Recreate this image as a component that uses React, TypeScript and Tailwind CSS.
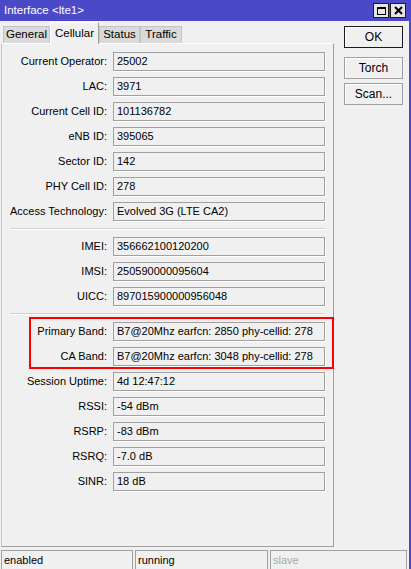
import React from 'react'

type Field = { label: string; value: string }

const radioInfo: Field[] = [
  { label: 'Current Operator:', value: '25002' },
  { label: 'LAC:', value: '3971' },
  { label: 'Current Cell ID:', value: '101136782' },
  { label: 'eNB ID:', value: '395065' },
  { label: 'Sector ID:', value: '142' },
  { label: 'PHY Cell ID:', value: '278' },
  { label: 'Access Technology:', value: 'Evolved 3G (LTE CA2)' },
]

const simInfo: Field[] = [
  { label: 'IMEI:', value: '356662100120200' },
  { label: 'IMSI:', value: '250590000095604' },
  { label: 'UICC:', value: '897015900000956048' },
]

const signalInfo: Field[] = [
  { label: 'Primary Band:', value: 'B7@20Mhz earfcn: 2850 phy-cellid: 278' },
  { label: 'CA Band:', value: 'B7@20Mhz earfcn: 3048 phy-cellid: 278' },
  { label: 'Session Uptime:', value: '4d 12:47:12' },
  { label: 'RSSI:', value: '-54 dBm' },
  { label: 'RSRP:', value: '-83 dBm' },
  { label: 'RSRQ:', value: '-7.0 dB' },
  { label: 'SINR:', value: '18 dB' },
]

const tabs = [
  { name: 'General', width: 'w-[47px]' },
  { name: 'Cellular', width: 'w-[49px]', active: true },
  { name: 'Status', width: 'w-[41px]' },
  { name: 'Traffic', width: 'w-[42px]' },
]

function Row({ label, value }: Field) {
  return (
    <div className="flex items-center h-[19px]">
      <div className="w-[105px] text-right whitespace-nowrap">{label}</div>
      <div className="ml-[6px] w-[212px] h-[19px] border border-[#a0a0a0] shadow-[1px_1px_0_0_#ffffff] pl-[3px] flex items-center whitespace-nowrap overflow-hidden">
        {value}
      </div>
    </div>
  )
}

function Separator() {
  return (
    <div className="h-[4px] pt-[1px]">
      <div className="ml-[8px] w-[315px] h-[2px] border-t border-[#d0d0d0] border-b border-b-white" />
    </div>
  )
}

function SideButton({ label, primary }: { label: string; primary?: boolean }) {
  return (
    <button
      className={
        'w-[59px] h-[22px] bg-[#f0f0f0] flex items-center justify-center text-[12px] ' +
        (primary
          ? 'border border-[#1a1a1a] shadow-[inset_1px_1px_0_0_#ffffff]'
          : 'border border-[#a0a0a0] shadow-[inset_1px_1px_0_0_#ffffff]')
      }
    >
      {label}
    </button>
  )
}

export default function App() {
  return (
    <div className="relative w-[411px] h-[569px] bg-[#f0f0f0] flex overflow-hidden font-['Liberation_Sans',Arial,sans-serif] text-[11px] text-black">
      <div className="flex-1 flex flex-col">
        {/* title bar */}
        <div className="h-[21px] bg-[#4a4ac8] flex items-center pl-[4px] pr-[3px]">
          <span className="text-white text-[11.5px]">Interface &lt;lte1&gt;</span>
          <div className="ml-auto flex gap-[1px]">
            <div className="w-[16px] h-[15px] bg-[#e6e6e6] border border-[#1e1e1e] flex items-center justify-center">
              <div className="w-[9px] h-[8px] border border-black border-t-2" />
            </div>
            <div className="w-[16px] h-[15px] bg-[#e6e6e6] border border-[#1e1e1e] flex items-center justify-center">
              <svg width="9" height="9" viewBox="0 0 9 9">
                <path d="M1 1 L8 8 M8 1 L1 8" stroke="#000" strokeWidth="2" />
              </svg>
            </div>
          </div>
        </div>

        <div className="flex flex-1">
          {/* tabs + cellular page */}
          <div className="w-[334px] pl-[1px] flex flex-col">
            <div className="h-[22px] flex items-end pl-[2px] relative z-10">
              {tabs.map((t) =>
                t.active ? (
                  <div
                    key={t.name}
                    className={t.width + ' h-[22px] -mb-[1px] bg-[#f0f0f0] border-t border-l border-white border-r border-r-[#a0a0a0] flex items-start justify-center pt-[2px] text-[11.5px]'}
                  >
                    {t.name}
                  </div>
                ) : (
                  <div
                    key={t.name}
                    className={t.width + ' h-[17px] bg-[#dadada] border-t border-l border-r border-[#c4c4c4] flex items-center justify-center text-[11.5px]'}
                  >
                    {t.name}
                  </div>
                )
              )}
            </div>
            <div className="w-[333px] h-[504px] border border-t-white border-l-[#c8c8c8] border-r-[#a0a0a0] border-b-[#a0a0a0] pt-[8px] flex flex-col gap-[6px]">
              {radioInfo.map((f) => (
                <Row key={f.label} {...f} />
              ))}
              <Separator />
              {simInfo.map((f) => (
                <Row key={f.label} {...f} />
              ))}
              <Separator />
              {signalInfo.map((f) => (
                <Row key={f.label} {...f} />
              ))}
            </div>
          </div>

          {/* dialog buttons */}
          <div className="pl-[10px] pt-[5px] flex flex-col">
            <SideButton label="OK" primary />
            <div className="h-[9px]" />
            <SideButton label="Torch" />
            <div className="h-[4px]" />
            <SideButton label="Scan..." />
          </div>
        </div>

        {/* status bar */}
        <div className="h-[22px] pt-[3px] pl-[1px] flex gap-[2px]">
          <div className="w-[132px] h-[19px] border-t border-l border-r border-[#a0a0a0] pl-[2px] flex items-center">enabled</div>
          <div className="w-[133px] h-[19px] border-t border-l border-r border-[#a0a0a0] pl-[2px] flex items-center">running</div>
          <div className="w-[137px] h-[19px] border-t border-l border-r border-[#a0a0a0] pl-[2px] flex items-center text-[#a8a8a8]">slave</div>
        </div>
      </div>
      <div className="w-[2px] h-full bg-[#4a4ac8]" />

      {/* highlight around the band rows */}
      <div className="absolute left-[29px] top-[317px] w-[305px] h-[52px] border-2 border-[#ff0000] pointer-events-none" />
    </div>
  )
}
